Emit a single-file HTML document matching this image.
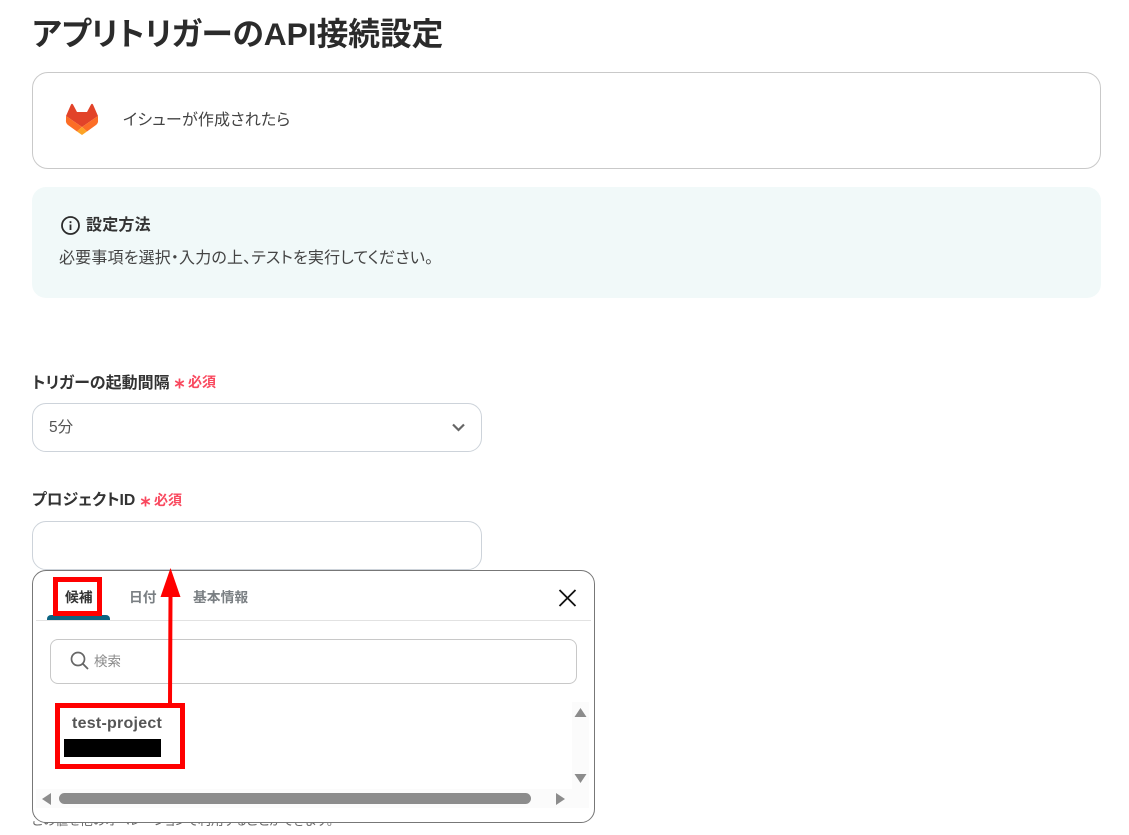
<!DOCTYPE html>
<html lang="ja">
<head>
<meta charset="utf-8">
<style>
html,body{margin:0;padding:0;background:#fff}
body{width:1129px;height:835px;position:relative;overflow:hidden;font-family:"Liberation Sans","Noto Sans CJK JP",sans-serif;color:#333;font-feature-settings:"palt"}
.a{position:absolute;white-space:nowrap;line-height:1}
.box{position:absolute;box-sizing:border-box;background:#fff}
</style>
</head>
<body>
<div class="a" style="left:32px;top:19px;font-size:31.700px;font-weight:700;color:#2b2b2b">アプリトリガーのAPI接続設定</div>

<div class="box" style="left:32px;top:72px;width:1069px;height:97px;border:1px solid #c9c9c9;border-radius:16px"></div>
<svg class="a" style="left:64px;top:102px" width="36" height="34" viewBox="0 0 36 34">
<path d="M2 14 L7 2.500 Q8 1 9 2.500 L13 10 L23 10 L27 2.500 Q28 1 29 2.500 L34 14 L18 25 Z" fill="#e24329"/>
<path d="M2 14 L18 25 L13 29.500 L4 23 Q1.500 21 2 18 Z" fill="#fc6d26"/>
<path d="M34 14 L18 25 L23 29.500 L32 23 Q34.500 21 34 18 Z" fill="#fc6d26"/>
<path d="M18 25 L23 29.500 L18 33 L13 29.500 Z" fill="#fca326"/>
</svg>
<div class="a" style="left:123px;top:113px;font-size:16px;letter-spacing:.2px;color:#444">イシューが作成されたら</div>

<div class="box" style="left:32px;top:187px;width:1069px;height:111px;background:#f1f9f9;border-radius:14px"></div>
<svg class="a" style="left:60px;top:215px" width="21" height="21" viewBox="0 0 21 21" fill="none">
<circle cx="10.500" cy="10.500" r="8.500" stroke="#2b2b2b" stroke-width="1.800"/>
<rect x="9.600" y="9.500" width="1.800" height="5.500" fill="#2b2b2b"/>
<rect x="9.600" y="6.200" width="1.800" height="1.900" fill="#2b2b2b"/>
</svg>
<div class="a" style="left:86px;top:218px;font-size:16px;font-weight:700;letter-spacing:.2px;color:#333">設定方法</div>
<div class="a" style="left:59px;top:251px;font-size:16px;letter-spacing:.16px;color:#444">必要事項を選択・入力の上、テストを実行してください。</div>

<div class="a" style="left:32px;top:376px;font-size:16px;font-weight:700;color:#333">トリガーの起動間隔</div>
<svg class="a" style="left:174px;top:378px" width="11" height="11" viewBox="0 0 11 11" fill="none"><path d="M5.500 .5 V10.500 M1.200 3 L9.800 8 M9.800 3 L1.200 8" stroke="#f9495f" stroke-width="1.700"/></svg>
<div class="a" style="left:188px;top:375px;font-size:14px;font-weight:700;color:#f9495f">必須</div>
<div class="box" style="left:32px;top:403px;width:450px;height:49px;border:1px solid #cdd3da;border-radius:14px"></div>
<div class="a" style="left:49px;top:420px;font-size:15.500px;color:#555">5分</div>
<svg class="a" style="left:451px;top:422px" width="15" height="11" viewBox="0 0 15 11" fill="none"><path d="M2 2.500 L7.500 8 L13 2.500" stroke="#666" stroke-width="2.200"/></svg>

<div class="a" style="left:32px;top:493px;font-size:15.800px;font-weight:700;color:#333">プロジェクトID</div>
<svg class="a" style="left:140px;top:496px" width="11" height="11" viewBox="0 0 11 11" fill="none"><path d="M5.500 .5 V10.500 M1.200 3 L9.800 8 M9.800 3 L1.200 8" stroke="#f9495f" stroke-width="1.700"/></svg>
<div class="a" style="left:154px;top:493px;font-size:14px;font-weight:700;color:#f9495f">必須</div>
<div class="box" style="left:32px;top:521px;width:450px;height:49px;border:1px solid #cdd3da;border-radius:14px"></div>

<div class="a" style="left:32px;top:815px;font-size:12.800px;color:#666">この値を他のオペレーションで利用することができます。</div>

<div class="box" style="left:32px;top:570px;width:563px;height:253px;border:1px solid #777;border-radius:14px"></div>
<div class="a" style="left:36px;top:620px;width:555px;height:1px;background:#e2e2e2"></div>
<div class="a" style="left:47px;top:615px;width:63px;height:5px;background:#0c6482;border-radius:4px 4px 0 0"></div>
<div class="a" style="left:65px;top:591px;font-size:13.800px;font-weight:700;color:#333">候補</div>
<div class="a" style="left:129px;top:591px;font-size:13.800px;font-weight:700;color:#7a7f83">日付</div>
<div class="a" style="left:193px;top:591px;font-size:13.800px;font-weight:700;color:#7a7f83">基本情報</div>
<svg class="a" style="left:558px;top:589px" width="19" height="18" viewBox="0 0 19 18" fill="none"><path d="M1.500 1 L17.500 17 M17.500 1 L1.500 17" stroke="#111" stroke-width="1.800"/></svg>

<div class="box" style="left:50px;top:639px;width:527px;height:45px;border:1px solid #c8c8c8;border-radius:8px"></div>
<svg class="a" style="left:70px;top:651px" width="20" height="20" viewBox="0 0 20 20" fill="none"><circle cx="8" cy="8" r="6.500" stroke="#666" stroke-width="1.700"/><path d="M12.800 12.800 L18 18" stroke="#666" stroke-width="1.800"/></svg>
<div class="a" style="left:94px;top:655px;font-size:13.500px;color:#8a8a8a">検索</div>

<div class="a" style="left:72px;top:716px;font-size:16px;font-weight:700;letter-spacing:.25px;color:#555">test-project</div>
<div class="a" style="left:64px;top:739px;width:97px;height:18px;background:#000"></div>

<div class="a" style="left:572px;top:702px;width:17px;height:87px;background:#fbfbfb"></div>
<div class="a" style="left:36px;top:789px;width:553px;height:19px;background:#fbfbfb"></div>
<svg class="a" style="left:574px;top:707px" width="13" height="11" viewBox="0 0 13 11"><path d="M6.500 1 L12.500 10 L0.500 10 Z" fill="#8c8c8c"/></svg>
<svg class="a" style="left:574px;top:773px" width="13" height="11" viewBox="0 0 13 11"><path d="M0.500 1 L12.500 1 L6.500 10 Z" fill="#8c8c8c"/></svg>
<svg class="a" style="left:41px;top:792px" width="11" height="14" viewBox="0 0 11 14"><path d="M10 1 L10 13 L1 7 Z" fill="#8c8c8c"/></svg>
<svg class="a" style="left:555px;top:792px" width="11" height="14" viewBox="0 0 11 14"><path d="M1 1 L1 13 L10 7 Z" fill="#8c8c8c"/></svg>
<div class="a" style="left:59px;top:793px;width:472px;height:11px;background:#8c8c8c;border-radius:6px"></div>

<div class="box" style="left:53px;top:577px;width:49px;height:39px;border:5px solid #f00;background:transparent"></div>
<div class="box" style="left:55px;top:703px;width:130px;height:66px;border:5px solid #f00;background:transparent"></div>
<svg class="a" style="left:160px;top:568px" width="22" height="136" viewBox="0 0 22 136"><path d="M10.500 0 L20.500 29 L12.500 29 L12 136 L8 136 L8.500 29 L0.500 29 Z" fill="#f00"/></svg>
</body>
</html>
